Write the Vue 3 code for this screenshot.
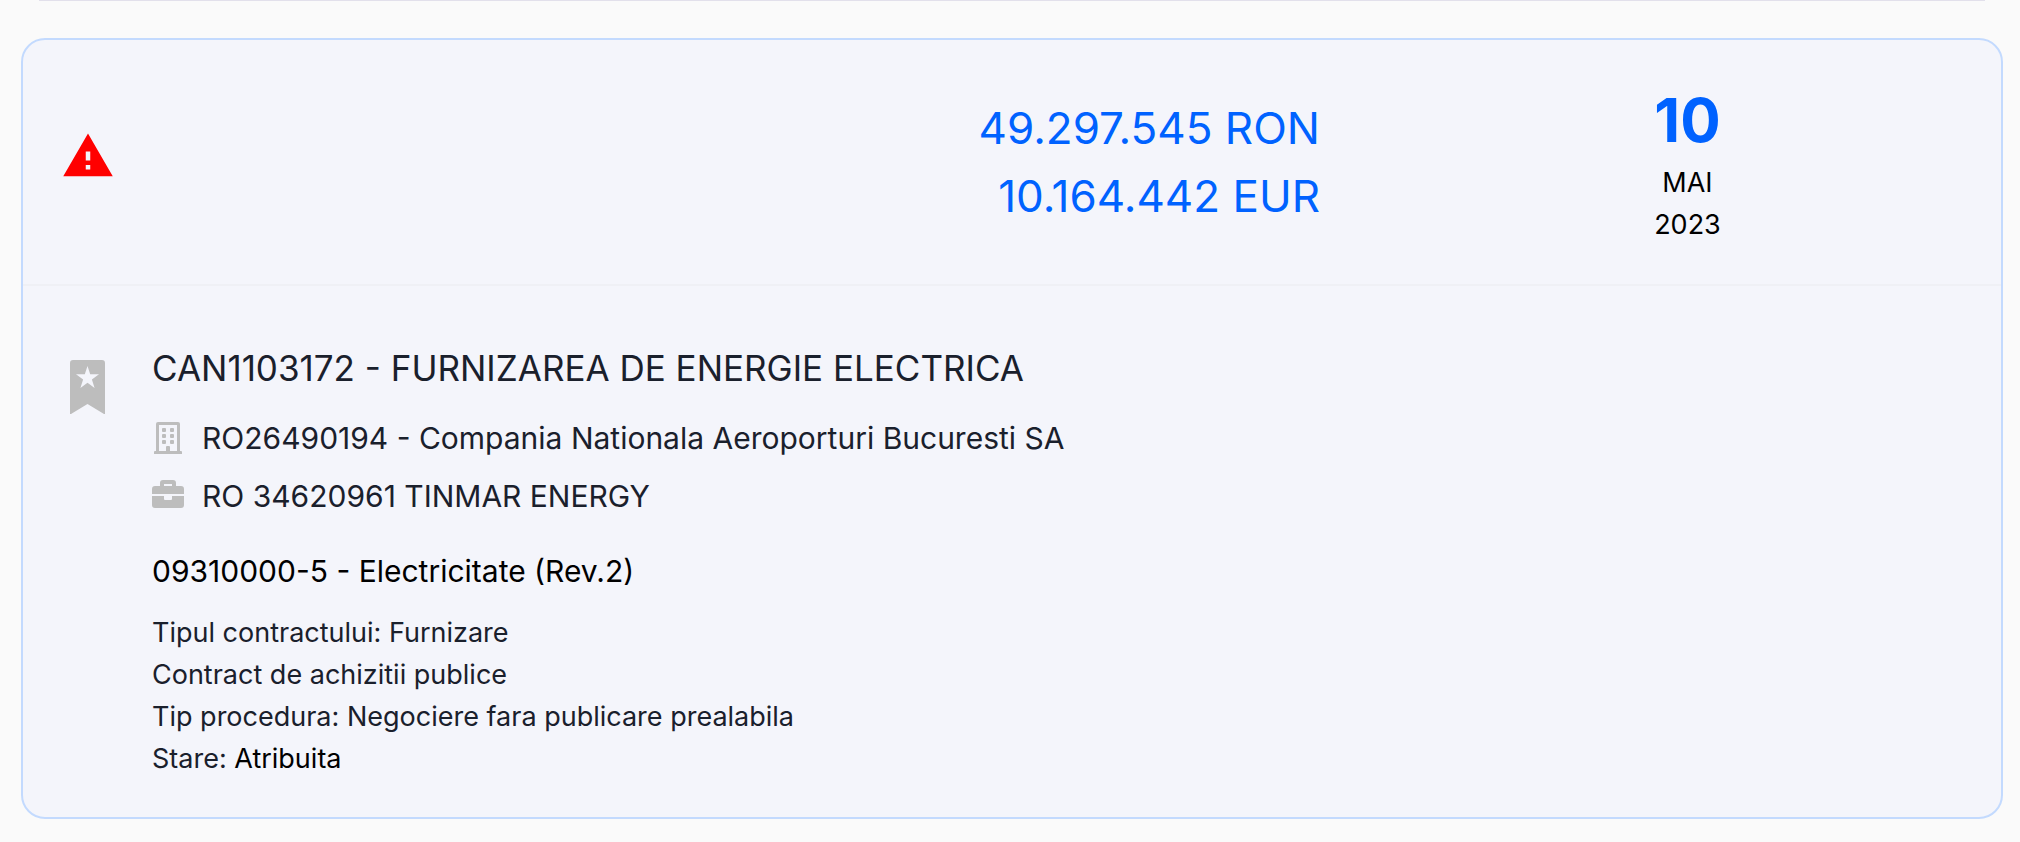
<script setup>
import { reactive } from "vue";

const contract = reactive({
  title: "CAN1103172 - FURNIZAREA DE ENERGIE ELECTRICA",
  authority: "RO26490194 - Compania Nationala Aeroporturi Bucuresti SA",
  supplier: "RO 34620961 TINMAR ENERGY",
  cpv: "09310000-5 - Electricitate (Rev.2)",
  amounts: ["49.297.545 RON", "10.164.442 EUR"],
  day: "10",
  month: "MAI",
  year: "2023",
  details: [
    "Tipul contractului: Furnizare",
    "Contract de achizitii publice",
    "Tip procedura: Negociere fara publicare prealabila",
  ],
  state: "Atribuita",
  saved: false,
});

function toggleSaved() {
  contract.saved = !contract.saved;
}
</script>

<template>
  <main class="page">
    <div class="list__edge"></div>
    <article class="card">
      <header class="card__header">
        <div class="header__main">
          <svg class="alert__icon" viewBox="0 0 24 24" aria-label="Alerta">
            <path d="M13 14h-2v-4h2m0 8h-2v-2h2M1 21h22L12 2 1 21z" />
          </svg>
          <div class="amounts">
            <p v-for="amount in contract.amounts" :key="amount">{{ amount }}</p>
          </div>
        </div>
        <time class="date" datetime="2023-05-10">
          <span class="date__day">{{ contract.day }}</span>
          <span>{{ contract.month }}</span>
          <span>{{ contract.year }}</span>
        </time>
      </header>

      <div class="card__body">
        <button
          type="button"
          class="bookmark"
          aria-label="Salveaza"
          :aria-pressed="contract.saved"
          @click="toggleSaved"
        >
          <svg class="bookmark__icon" viewBox="0 0 35 54">
            <path
              fill-rule="evenodd"
              d="M3 0h29a3 3 0 0 1 3 3v51h-1L17.5 44 1 54H0V3a3 3 0 0 1 3-3zM17.5 6l-2.700 8.300H6l7.100 5.200-2.700 8.500 7.100-5.200 7.100 5.200-2.700-8.500 7.100-5.200h-8.800z"
            />
          </svg>
        </button>
        <div class="info">
          <h2 class="info__title">{{ contract.title }}</h2>
          <p class="info__company">
            <svg class="company__icon" viewBox="0 0 32 32">
              <path
                fill-rule="evenodd"
                d="M6 0h20a2 2 0 0 1 2 2v27h1a1 1 0 0 1 1 1v2H2v-2a1 1 0 0 1 1-1h1V2a2 2 0 0 1 2-2zM7 3v26h7v-4a1 1 0 0 1 1-1h2a1 1 0 0 1 1 1v4h7V3z"
              />
              <rect x="10" y="6" width="4" height="4" rx="1" />
              <rect x="18" y="6" width="4" height="4" rx="1" />
              <rect x="10" y="12" width="4" height="4" rx="1" />
              <rect x="18" y="12" width="4" height="4" rx="1" />
              <rect x="10" y="18" width="4" height="4" rx="1" />
              <rect x="18" y="18" width="4" height="4" rx="1" />
            </svg>
            <span>{{ contract.authority }}</span>
          </p>
          <p class="info__company">
            <svg class="company__icon" viewBox="0 0 32 32">
              <path
                fill-rule="evenodd"
                d="M0 14V9a3 3 0 0 1 3-3h5V3a3 3 0 0 1 3-3h10a3 3 0 0 1 3 3v3h5a3 3 0 0 1 3 3v5zM12 4v2h8V4z"
              />
              <path
                d="M0 16h12v3a1 1 0 0 0 1 1h6a1 1 0 0 0 1-1v-3h12v9a3 3 0 0 1-3 3H3a3 3 0 0 1-3-3z"
              />
            </svg>
            <span>{{ contract.supplier }}</span>
          </p>
          <p class="info__cpv">{{ contract.cpv }}</p>
          <div class="info__details">
            <p v-for="detail in contract.details" :key="detail">{{ detail }}</p>
            <p>
              Stare: <span class="state">{{ contract.state }}</span>
            </p>
          </div>
        </div>
      </div>
    </article>
  </main>
</template>

<style>
body {
  background: #fafafa;
}
</style>

<style scoped>
.page {
  padding: 0 17px 22px 21px;

  font-family: Inter, "Liberation Sans", sans-serif;
  color: #1a202c;
}

p,
h2 {
  margin: 0;
  font-weight: 400;
}

.list__edge {
  height: 1px;
  margin: 0 18px 37px;
  background: #e2e0eb;
}

.card {
  border: 2px solid #c3dafe;
  border-radius: 24px;
  background: #f4f5fb;
}

.card__header {
  display: grid;
  grid-template-columns: 68.3% 1fr;
  align-items: center;

  padding: 38px 0;
  border-bottom: 2px solid #eff0f5;
}

.header__main {
  display: flex;
  align-items: center;
  justify-content: space-between;

  padding: 0 54px 0 38px;
}

.alert__icon {
  width: 54px;
  height: 54px;
  padding-bottom: 12px;
  fill: #ff0000;
}

.amounts {
  font-size: 44px;
  line-height: 68px;
  text-align: right;
  color: #0062ff;
}

.date {
  display: flex;
  flex-direction: column;
  align-items: center;

  font-size: 27px;
  line-height: 42px;
  color: #000;
}

.date__day {
  font-size: 60px;
  font-weight: 700;
  line-height: 84px;
  color: #0062ff;
}

.card__body {
  display: grid;
  grid-template-columns: 129px 1fr;
  align-items: start;

  padding: 55px 0 37px;
}

.bookmark {
  display: flex;
  justify-content: center;

  padding: 19px 0 0;
  border: none;
  background: none;
  cursor: pointer;
}

.bookmark__icon {
  width: 35px;
  height: 54px;
  fill: #bdbdbd;
}

.info__title {
  padding-bottom: 14px;
  font-size: 35px;
  line-height: 54px;
}

.info__company {
  display: flex;
  align-items: center;
  gap: 18px;

  font-size: 30px;
  line-height: 58px;
}

.company__icon {
  width: 32px;
  height: 32px;
  fill: #bdbdbd;
}

.info__cpv {
  padding: 22px 0 17px;
  font-size: 30px;
  line-height: 48px;
  color: #000;
}

.info__details {
  font-size: 27px;
  line-height: 42px;
}

.state {
  color: #000;
}
</style>
